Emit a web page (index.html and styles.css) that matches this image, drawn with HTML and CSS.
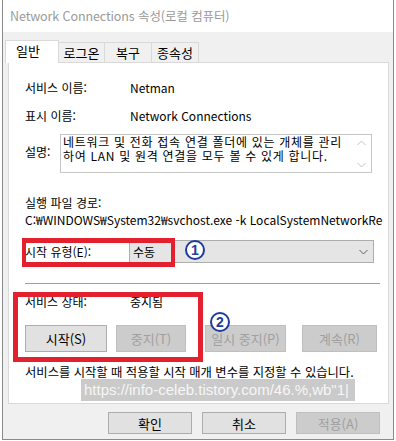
FILE: index.html
```html
<!DOCTYPE html>
<html lang="ko">
<head>
<meta charset="utf-8">
<link rel="stylesheet" href="styles.css">
</head>
<body>
<div class="window">
  <div class="titlebar">Network Connections 속성(로컬 컴퓨터)</div>
  <div class="tabs">
    <div class="tab active">일반</div>
    <div class="tab t1">로그온</div>
    <div class="tab t2">복구</div>
    <div class="tab t3">종속성</div>
  </div>
  <div class="panel">
    <div class="row r-name"><span class="label">서비스 이름:</span><span>Netman</span></div>
    <div class="row r-disp"><span class="label">표시 이름:</span><span>Network Connections</span></div>
    <div class="r-desc">
      <span class="desc-label">설명:</span>
      <div class="textbox">
        <div class="desc-text">네트워크 및 전화 접속 연결 폴더에 있는 개체를 관리하여 LAN 및 원격 연결을 모두 볼 수 있게 합니다.</div>
        <div class="scroll">
          <svg width="9" height="6" viewBox="0 0 9 6"><path d="M0.5 5 L4.5 1 L8.5 5" fill="none" stroke="#c4c4c4" stroke-width="1"/></svg>
          <svg width="9" height="6" viewBox="0 0 9 6"><path d="M0.5 1 L4.5 5 L8.5 1" fill="none" stroke="#c4c4c4" stroke-width="1"/></svg>
        </div>
      </div>
    </div>
    <div class="row r-pathlabel">실행 파일 경로:</div>
    <div class="row r-path">C:₩WINDOWS₩System32₩svchost.exe -k LocalSystemNetworkRe</div>
    <div class="r-start">
      <span class="start-label">시작 유형(E):</span>
      <div class="combo">
        <span>수동</span>
        <svg width="9" height="6" viewBox="0 0 9 6"><path d="M0.5 1 L4.5 5 L8.5 1" fill="none" stroke="#606060" stroke-width="1"/></svg>
      </div>
    </div>
    <div class="sep"></div>
    <div class="row r-status"><span class="label">서비스 상태:</span><span>중지됨</span></div>
    <div class="svc-buttons">
      <div class="btn b-start">시작(S)</div>
      <div class="btn disabled b-stop">중지(T)</div>
      <div class="btn disabled b-pause">일시 중지(P)</div>
      <div class="btn disabled b-resume">계속(R)</div>
    </div>
    <div class="row r-hint">서비스를 시작할 때 적용할 시작 매개 변수를 지정할 수 있습니다.</div>
  </div>
  <div class="dlg-buttons">
    <div class="btn dlg">확인</div>
    <div class="btn dlg">취소</div>
    <div class="btn dlg disabled">적용(A)</div>
  </div>

  <div class="redbox box1"></div>
  <div class="redbox box2"></div>
  <div class="num n1">1</div>
  <div class="num n2">2</div>
  <div class="watermark">https://info-celeb.tistory.com/46.%,wb"1|</div>
</div>
</body>
</html>
```

FILE: styles.css
```css
* { box-sizing: border-box; }
html, body { margin: 0; padding: 0; background: #ffffff; }
body {
  width: 396px;
  height: 441px;
  overflow: hidden;
  font-family: "Noto Sans CJK KR", "Noto Sans", sans-serif;
  font-size: 12px;
  color: #000;
}
.window {
  position: relative;
  margin-left: 2px;
  width: 392px;
  height: 440px;
  background: #f0f0f0;
  border: 1px solid #8a8a8a;
  border-top: none;
}
.titlebar {
  height: 32px;
  background: #fff;
  padding-left: 7px;
  line-height: 32px;
  font-size: 12.5px;
  color: #9a9a9a;
  letter-spacing: -0.1px;
}
.tabs {
  margin-top: 8px;
  height: 22px;
  display: flex;
  align-items: flex-end;
  padding-left: 2px;
}
.tab {
  height: 20px;
  line-height: 19px;
  font-size: 13px;
  text-align: center;
  border: 1px solid #d9d9d9;
  border-bottom: none;
  border-left: none;
  background: #f0f0f0;
}
.tab.active {
  position: relative;
  z-index: 2;
  width: 54px;
  height: 23px;
  margin-bottom: -1px;
  line-height: 20px;
  background: #fff;
  border-left: 1px solid #d9d9d9;
  text-align: left;
  padding-left: 10px;
}
.t1 { width: 46px; }
.t2 { width: 47px; }
.t3 { width: 47px; }
.panel {
  position: relative;
  z-index: 1;
  margin-left: 5px;
  width: 381px;
  height: 342px;
  background: #fff;
  border: 1px solid #d9d9d9;
  padding: 17px 0 0 16px;
}
.row {
  display: flex;
  height: 16px;
  line-height: 16px;
  white-space: nowrap;
}
.label { width: 105px; flex: none; }
.r-disp { margin-top: 12px; }
.r-desc {
  margin-top: 10px;
  display: flex;
  align-items: center;
  height: 39px;
}
.desc-label { width: 35px; flex: none; margin-top: -5px; }
.textbox {
  width: 312px;
  height: 39px;
  border: 1px solid #c6c6c6;
  display: flex;
  padding: 0 0 0 2px;
}
.desc-text {
  width: 288px;
  flex: none;
  line-height: 14px;
  padding-top: 0px;
  letter-spacing: 0.7px;
  word-break: break-all;
}
.scroll {
  flex: 1;
  display: flex;
  flex-direction: column;
  justify-content: space-between;
  align-items: center;
  padding: 5px 0 4px;
}
.r-pathlabel { margin-top: 22px; }
.r-path {
  margin-top: 1px;
  width: 358px;
  overflow: hidden;
}
.r-start {
  margin-top: 12px;
  display: flex;
  align-items: center;
  height: 23px;
}
.start-label { width: 104px; flex: none; }
.combo {
  width: 245px;
  height: 23px;
  background: #e5e5e5;
  border: 1px solid #adadad;
  display: flex;
  align-items: center;
  justify-content: space-between;
  padding: 0 5px 0 3px;
}
.sep {
  margin-top: 20px;
  width: 355px;
  height: 1px;
  background: #a0a0a0;
}
.r-status { margin-top: 10px; }
.svc-buttons {
  margin-top: 15px;
  display: flex;
  height: 27px;
}
.btn {
  height: 100%;
  display: flex;
  align-items: center;
  justify-content: center;
  background: #e1e1e1;
  border: 1px solid #adadad;
  font-size: 13px;
  white-space: nowrap;
}
.btn.disabled {
  background: #cccccc;
  border-color: #bfbfbf;
  color: #a0a0a0;
}
.b-start { width: 82px; }
.b-stop { width: 70px; margin-left: 9px; }
.b-pause { width: 81px; margin-left: 19px; }
.b-resume { width: 75px; margin-left: 16px; }
.r-hint { margin-top: 12px; font-size: 12.3px; }
.dlg-buttons {
  margin-top: 8px;
  height: 22px;
  display: flex;
  justify-content: flex-end;
  gap: 10px;
  padding-right: 13px;
}
.btn.dlg { width: 84px; }

.redbox {
  position: absolute;
  z-index: 5;
  border: 5px solid #e3202d;
}
.box1 { left: 19px; top: 238px; width: 153px; height: 29px; border-width: 5px 4px; }
.box2 { left: 10px; top: 292px; width: 190px; height: 70px; }
.num {
  position: absolute;
  z-index: 6;
  width: 20px;
  height: 20px;
  border: 2px solid #1e3c9c;
  border-radius: 50%;
  background: #fff;
  color: #1e3c9c;
  font-family: "Liberation Sans", sans-serif;
  font-weight: bold;
  font-size: 14px;
  line-height: 16px;
  text-align: center;
}
.n1 { left: 182px; top: 240px; }
.n2 { left: 207px; top: 312px; }
.watermark {
  position: absolute;
  z-index: 6;
  left: 78px;
  top: 379px;
  width: 274px;
  height: 22px;
  background: rgba(150, 150, 150, 0.5);
  color: #f6f6f6;
  font-family: "Liberation Sans", sans-serif;
  font-size: 15px;
  line-height: 22px;
  padding-left: 3px;
  white-space: nowrap;
  overflow: hidden;
}
```
